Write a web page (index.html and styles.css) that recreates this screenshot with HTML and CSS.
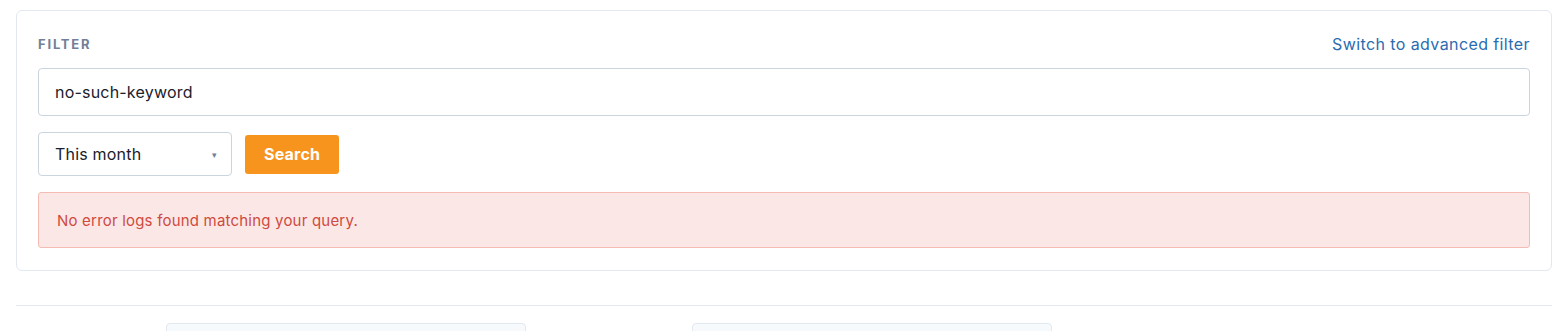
FILE: index.html
```html
<!doctype html>
<html>
    <head>
        <meta charset="utf-8" />
        <title>Error Logs</title>
        <link rel="stylesheet" href="styles.css">
    </head>
    <body>
        <div class="page">
            <div class="filter-card">
                <div class="filter-header">
                    <span class="filter-label">Filter</span>
                    <a href="#" class="filter-switch">Switch to advanced filter</a>
                </div>

                <input
                    type="text"
                    class="filter-input"
                    value="no-such-keyword"
                />

                <div class="filter-row">
                    <div class="period-select">
                        <span>This month</span>
                        <span class="caret">▾</span>
                    </div>
                    <button class="search-btn">Search</button>
                </div>

                <div class="alert">
                    No error logs found matching your query.
                </div>
            </div>

            <hr class="divider" />

            <div class="below-row">
                <div class="ghost-box"></div>
                <div class="ghost-box"></div>
            </div>
        </div>
    </body>
</html>
```

FILE: styles.css
```css
body {
    font-family: Inter, "Noto Sans", sans-serif;
    margin: 0;
    background-color: #fff;
    color: #1a202c;
}

.page {
    padding: 10px 16px 0;
}

.filter-card {
    border: 1px solid #e2e8f0;
    border-radius: 6px;
    padding: 21px 21px 22px;
    background: white;
}

.filter-header {
    display: flex;
    justify-content: space-between;
    align-items: center;
    height: 24px;
    margin-bottom: 12px;
}

.filter-label {
    font-size: 13px;
    font-weight: 700;
    letter-spacing: 1.8px;
    text-transform: uppercase;
    color: #718096;
}

.filter-switch {
    font-size: 16px;
    letter-spacing: 0.4px;
    color: #2b6cb0;
    text-decoration: none;
}

.filter-input {
    display: block;
    width: 100%;
    height: 48px;
    box-sizing: border-box;
    padding: 0 16px;
    border: 1px solid #cbd5e0;
    border-radius: 4px;
    font-family: inherit;
    font-size: 16px;
    letter-spacing: 0.2px;
    color: #1a202c;
}

.filter-row {
    display: flex;
    align-items: center;
    gap: 13px;
    margin-top: 16px;
}

.period-select {
    display: flex;
    justify-content: space-between;
    align-items: center;
    width: 194px;
    height: 44px;
    box-sizing: border-box;
    padding: 0 14px 0 16px;
    border: 1px solid #cbd5e0;
    border-radius: 4px;
    font-size: 16px;
    letter-spacing: 0.2px;
    color: #1a202c;
}

.caret {
    font-size: 9px;
    color: #718096;
}

.search-btn {
    background-color: #f7941d;
    color: white;
    border: none;
    border-radius: 3px;
    height: 39px;
    padding: 0 19px;
    font-family: inherit;
    font-size: 16px;
    font-weight: 700;
    letter-spacing: 0.2px;
    cursor: pointer;
}

.alert {
    margin-top: 16px;
    padding: 0 18px;
    height: 56px;
    box-sizing: border-box;
    display: flex;
    align-items: center;
    background-color: #fbe8e6;
    border: 1px solid #f5bcb3;
    border-radius: 3px;
    color: #cf4a40;
    font-size: 15px;
    letter-spacing: 0.2px;
}

.divider {
    border: none;
    border-top: 1px solid #e2e8f0;
    margin: 34px 0 0;
}

.below-row {
    display: flex;
    gap: 166px;
    margin-top: 17px;
    padding-left: 150px;
}

.ghost-box {
    width: 360px;
    height: 40px;
    background: #f7fafc;
    border: 1px solid #e2e8f0;
    border-radius: 4px;
    box-sizing: border-box;
}
```
